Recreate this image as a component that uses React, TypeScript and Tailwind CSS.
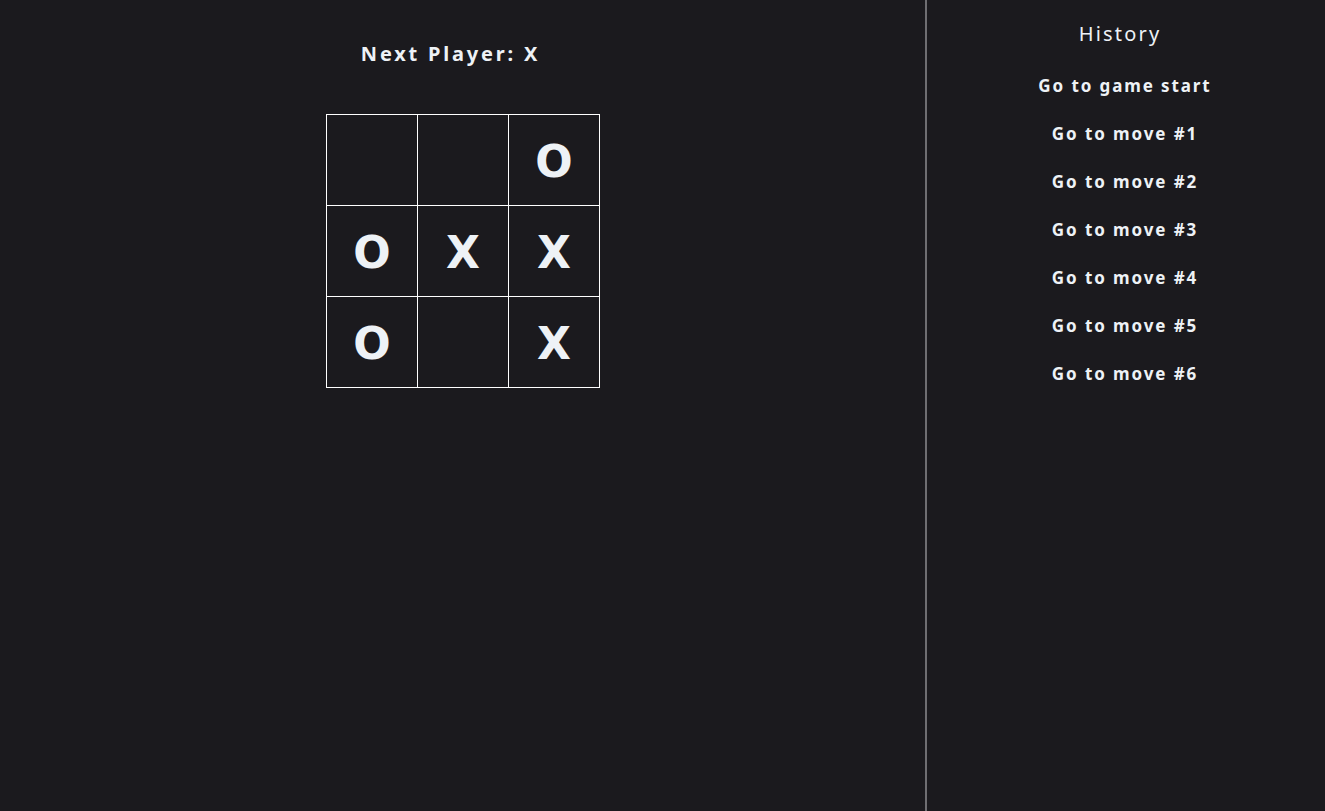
import React from "react";

// board state after move #6
const squares: (string | null)[] = [null, null, "O", "O", "X", "X", "O", null, "X"];
const moves = ["Go to game start", "Go to move #1", "Go to move #2", "Go to move #3", "Go to move #4", "Go to move #5", "Go to move #6"];

function Square({ value }: { value: string | null }) {
  return (
    <button className="-ml-px -mt-px flex h-[92px] w-[92px] items-center justify-center border border-white bg-[#1b1a1e] pt-[4px] font-['DejaVu_Sans',sans-serif] text-[44px] font-bold leading-none text-[#eef2f6]">
      {value}
    </button>
  );
}

export default function App() {
  return (
    <div className="flex h-[811px] w-full bg-[#1b1a1e] font-['Noto_Sans',sans-serif] text-[#eef2f6]">
      {/* Game */}
      <div className="flex w-[927px] flex-col items-center border-r-2 border-[#6f6e72]">
        <div className="mt-[39px] pr-[24px] text-[20px] font-bold tracking-[2.8px]">Next Player: X</div>
        <div className="mt-[45px] ml-[1px] grid grid-cols-3 pl-px pt-px">
          {squares.map((v, i) => (
            <Square key={i} value={v} />
          ))}
        </div>
      </div>

      {/* History */}
      <div className="flex flex-1 flex-col items-center">
        <div className="mt-[19px] pr-[12px] text-[20px] tracking-[2.2px]">History</div>
        <ol className="mt-[25px] flex flex-col items-center gap-[24px] pr-[2px]">
          {moves.map((m) => (
            <li key={m}>
              <button className="text-[17px] font-bold leading-[24px] tracking-[1.9px] text-[#eef2f6]">{m}</button>
            </li>
          ))}
        </ol>
      </div>
    </div>
  );
}
